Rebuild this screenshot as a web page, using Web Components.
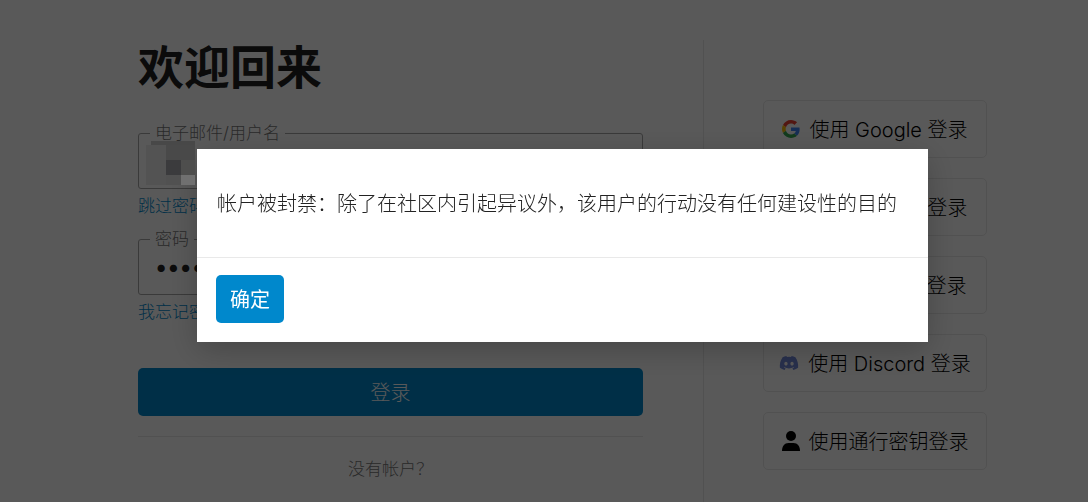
<!DOCTYPE html>
<html lang="zh-CN">
<head>
<meta charset="utf-8">
<title>登录</title>
<style>
  body { margin: 0; background: #fff; color: #222; font: 300 20px/24px Inter, "Noto Sans CJK SC", sans-serif; overflow: hidden; }
</style>
</head>
<body>
<login-page>
  <login-form slot="form">
    <text-field label="电子邮件/用户名" type="text" masked></text-field>
    <help-link>跳过密码</help-link>
    <text-field label="密码" type="password" value="secret"></text-field>
    <help-link>我忘记密码</help-link>
  </login-form>
  <social-button slot="social"><svg slot="icon" viewBox="0 0 48 48" width="18" height="18"><path fill="#EA4335" d="M24 9.500c3.500 0 6.700 1.200 9.200 3.600l6.900-6.900C35.900 2.400 30.500 0 24 0 14.600 0 6.500 5.400 2.600 13.200l8 6.200C12.400 13.700 17.700 9.500 24 9.500z"/><path fill="#4285F4" d="M47 24.500c0-1.600-.2-3.100-.4-4.500H24v9h12.900c-.6 3-2.200 5.500-4.700 7.200l7.700 6C44.400 38 47 31.800 47 24.500z"/><path fill="#FBBC05" d="M10.500 28.600c-.5-1.500-.8-3-.8-4.600s.3-3.100.8-4.600l-8-6.200C.9 16.500 0 20.100 0 24s.9 7.500 2.600 10.800z"/><path fill="#34A853" d="M24 48c6.500 0 11.900-2.100 15.900-5.800l-7.700-6c-2.100 1.400-4.900 2.300-8.200 2.300-6.300 0-11.600-4.200-13.500-9.900l-8 6.200C6.500 42.600 14.600 48 24 48z"/></svg>使用 Google 登录</social-button>
  <social-button slot="social"><svg slot="icon" viewBox="0 0 20 20" width="20" height="20"><path fill="#0866ff" d="M10 0a10 10 0 1 0 0 20 10 10 0 0 0 0-20z"/></svg>使用 GitHub 登录</social-button>
  <social-button slot="social"><svg slot="icon" viewBox="0 0 20 20" width="20" height="20"><path d="M2 2l16 16M18 2L2 18" stroke="#000" stroke-width="3"/></svg>使用 Twitter 登录</social-button>
  <social-button slot="social"><svg slot="icon" viewBox="0 0 640 512" width="20" height="20"><path fill="#7289da" d="M524.5 69.800a1.500 1.500 0 0 0-.8-.7A485.100 485.100 0 0 0 404.100 32a1.800 1.800 0 0 0-1.900.9 337.500 337.500 0 0 0-14.900 30.600 447.800 447.800 0 0 0-134.400 0 309.500 309.500 0 0 0-15.100-30.600 1.900 1.900 0 0 0-1.900-.9A483.700 483.700 0 0 0 116.100 69.100a1.700 1.700 0 0 0-.8.7C39.100 183.700 18.200 294.700 28.400 404.400a2 2 0 0 0 .8 1.400A487.700 487.700 0 0 0 176 479.900a1.900 1.900 0 0 0 2.100-.7A348.200 348.200 0 0 0 208.100 430.400a1.900 1.900 0 0 0-1-2.600 321.200 321.200 0 0 1-45.900-21.900 1.900 1.900 0 0 1-.2-3.100c3.100-2.300 6.200-4.700 9.100-7.100a1.800 1.800 0 0 1 1.900-.3c96.200 43.900 200.400 43.900 295.500 0a1.800 1.800 0 0 1 1.900.2c2.900 2.400 6 4.900 9.100 7.200a1.900 1.900 0 0 1-.2 3.100 301.400 301.400 0 0 1-45.900 21.800 1.900 1.900 0 0 0-1 2.600 391.100 391.100 0 0 0 30 48.800 1.900 1.900 0 0 0 2.100.7A486 486 0 0 0 610.700 405.700a1.900 1.900 0 0 0 .8-1.400C623.700 277.600 590.900 167.500 524.500 69.800zM222.500 337.600c-29 0-52.800-26.600-52.800-59.200S193 219.100 222.500 219.100c29.700 0 53.300 26.800 52.800 59.200C275.300 311 251.900 337.600 222.500 337.600zm195.400 0c-29 0-52.800-26.600-52.800-59.200S388.400 219.100 417.900 219.100c29.700 0 53.300 26.800 52.800 59.200C470.700 311 447.500 337.600 417.900 337.600z"/></svg>使用 Discord 登录</social-button>
  <social-button slot="social"><svg slot="icon" viewBox="0 0 18 20" width="18" height="20"><circle cx="9" cy="5" r="5"/><path d="M0 20c0-5 2.500-8 6.500-8h5c4 0 6.500 3 6.500 8z"/></svg>使用通行密钥登录</social-button>
</login-page>
<alert-dialog>帐户被封禁：除了在社区内引起异议外，该用户的行动没有任何建设性的目的</alert-dialog>

<script>
const define = (name, html, setup) => customElements.define(name, class extends HTMLElement {
  constructor() {
    super();
    this.attachShadow({ mode: 'open' }).innerHTML = '<style>*{box-sizing:border-box}</style>' + html;
  }
  connectedCallback() { if (setup) setup(this, this.shadowRoot); }
});

define('login-page', `
  <style>
    :host { display: flex; padding: 40px 101px 0 138px; height: 100vh; box-sizing: border-box; }
    main { flex: 1; min-width: 0; }
    aside { display: flex; flex-direction: column; gap: 20px; width: 284px; margin-left: 60px;
      padding: 60px 0 0 59px; border-left: 1px solid #e9e9e9; }
  </style>
  <main><slot name="form"></slot></main>
  <aside><slot name="social"></slot></aside>`);

define('login-form', `
  <style>
    :host { display: block; }
    h1 { margin: 0 0 38px; font-size: 46px; line-height: 55px; font-weight: 700; }
    form { margin: 0; }
    button { display: block; width: 100%; height: 48px; margin-top: 44px; padding: 2px 0 0; border: 0; border-radius: 5px;
      background: #08c; color: #fff; font: inherit; }
    hr { margin: 20px 0; border: 0; border-top: 1px solid #e9e9e9; }
    p { margin: 0; text-align: center; font-size: 17px; line-height: 24px; color: #777; }
  </style>
  <h1>欢迎回来</h1>
  <form>
    <slot></slot>
    <button type="button">登录</button>
  </form>
  <hr>
  <p>没有帐户？</p>`);

define('text-field', `
  <style>
    :host { display: block; position: relative; }
    input { display: block; width: 100%; height: 56px; padding: 0 16px; border: 1px solid #a6a6a6; border-radius: 3px;
      background: #fff; color: #222; font: inherit; outline: 0; }
    input[type=password] { font-size: 23px; font-weight: 500; }
    label { position: absolute; left: 12px; top: -12px; padding: 0 5px; background: #fff; color: #777;
      font-size: 17px; line-height: 24px; }
    .mask { display: none; position: absolute; z-index: 3; left: 8px; top: 8px; }
    :host([masked]) .mask { display: block; }
  </style>
  <input id="field"><label for="field"></label>
  <svg class="mask" width="49" height="44" viewBox="0 0 49 44" shape-rendering="crispEdges" aria-hidden="true">
    <path fill="#484848" d="M5 0h44v4H5z"/><path fill="#535353" d="M0 4h20v40H0z"/>
    <path fill="#494949" d="M20 4h29v15H20z"/><path fill="#3b3b3d" d="M20 19h15v15H20z"/>
    <path fill="#4e4e4d" d="M35 19h14v15H35z"/><path fill="#515151" d="M20 34h15v10H20z"/><path fill="#707070" d="M35 34h14v10H35z"/>
  </svg>`, (host, root) => {
  const input = root.querySelector('input');
  input.type = host.getAttribute('type');
  input.value = host.getAttribute('value') || '';
  root.querySelector('label').textContent = host.getAttribute('label');
});

define('help-link', `
  <style>
    :host { display: block; padding: 5px 0 21px; font-size: 17px; line-height: 24px; }
    :host(:last-of-type) { padding-bottom: 0; }
    a { color: #08c; text-decoration: none; }
  </style>
  <a href="#"><slot></slot></a>`);

define('social-button', `
  <style>
    :host { display: block; }
    button { display: flex; align-items: center; justify-content: center; gap: 9px; width: 100%; height: 58px;
      padding: 2px 0 0; border: 1px solid #e9e9e9; border-radius: 5px; background: #fff; color: #000; font: inherit; white-space: nowrap; }
    ::slotted(svg) { margin-bottom: 2px; }
  </style>
  <button type="button"><slot name="icon"></slot><span><slot></slot></span></button>`);

define('alert-dialog', `
  <style>
    :host { position: fixed; inset: 0; z-index: 2; display: flex; align-items: center; justify-content: center;
      padding: 0 0 11px 37px; box-sizing: border-box; background: rgba(0, 0, 0, .65); }
    section { width: 731px; max-width: 90%; background: #fff; box-shadow: 0 8px 30px rgba(0, 0, 0, .22); }
    p { margin: 0; padding: 43px 20px 41px; line-height: 24px; }
    footer { padding: 17px 19px 19px; border-top: 1px solid #e9e9e9; }
    button { display: block; height: 48px; padding: 2px 14px 0; border: 0; border-radius: 5px; background: #08c; color: #fff;
      font: inherit; font-weight: 400; }
  </style>
  <section role="alertdialog" aria-modal="true">
    <p><slot></slot></p>
    <footer><button type="button">确定</button></footer>
  </section>`);
</script>
</body>
</html>
